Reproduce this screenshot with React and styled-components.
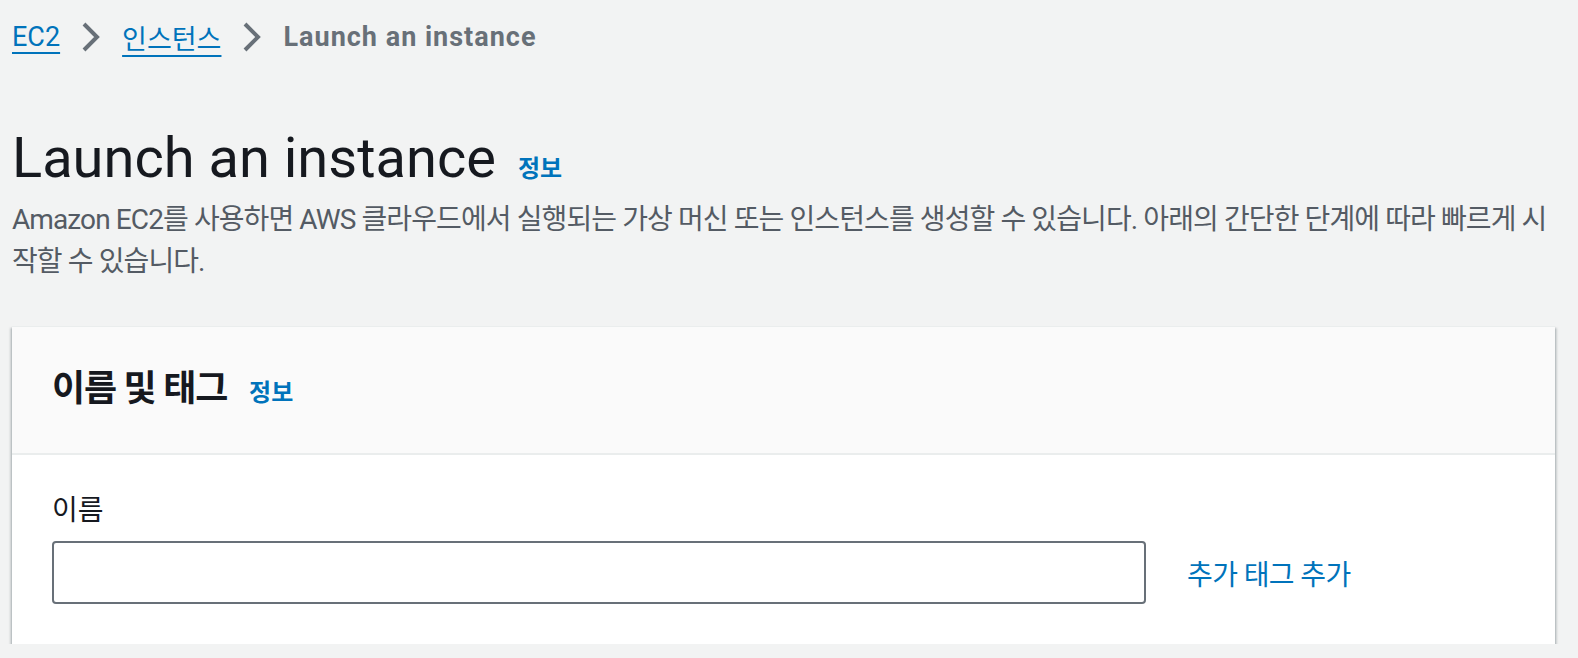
import styled, { createGlobalStyle } from 'styled-components';

const GlobalStyle = createGlobalStyle`
  html, body {
    margin: 0;
    padding: 0;
    background: #f2f3f3;
  }
  body {
    font-family: Roboto, "Noto Sans CJK KR", sans-serif;
    color: #16191f;
  }
`;

const Page = styled.div`
  padding: 0 23px 0 12px;
  display: flex;
  flex-direction: column;
`;

const Breadcrumbs = styled.nav`
  display: flex;
  align-items: center;
  height: 74px;
  gap: 21px;
  font-size: 27px;
`;

const Crumb = styled.a`
  color: ${(props) => (props.current ? '#687078' : '#0073bb')};
  font-weight: ${(props) => (props.current ? 700 : 400)};
  letter-spacing: ${(props) => (props.current ? '1px' : '0')};
  text-decoration: ${(props) => (props.current ? 'none' : 'underline')};
  text-decoration-thickness: 2px;
  text-underline-offset: 6px;
`;

const Chevron = () => (
  <svg width="20" height="30" viewBox="0 0 20 30" fill="none">
    <path d="M3 2l13 13L3 28" stroke="#687078" strokeWidth="4" />
  </svg>
);

const TitleRow = styled.div`
  display: flex;
  align-items: baseline;
  gap: 22px;
  margin-top: 48px;
`;

const Title = styled.h1`
  margin: 0;
  font-size: 56px;
  font-weight: 400;
  line-height: 72px;
  color: #16191f;
`;

const InfoLink = styled.a`
  color: #0073bb;
  font-weight: 700;
  font-size: 24px;
`;

const Description = styled.p`
  margin: 5px 0 0;
  font-size: 28px;
  line-height: 42px;
  letter-spacing: -0.9px;
  color: #545b64;
`;

const Card = styled.section`
  margin-top: 43px;
  background: #fff;
  border-top: 1px solid #eaeded;
  box-shadow: 0 2px 2px 0 rgba(0, 28, 36, 0.3), 2px 2px 2px 0 rgba(0, 28, 36, 0.15),
    -2px 2px 2px 0 rgba(0, 28, 36, 0.15);
`;

const CardHeader = styled.div`
  display: flex;
  align-items: baseline;
  gap: 22px;
  padding: 38px 40px 40px;
  background: #fafafa;
  border-bottom: 2px solid #eaeded;
`;

const CardTitle = styled.h2`
  margin: 0;
  font-size: 36px;
  line-height: 48px;
  font-weight: 700;
  letter-spacing: -1.2px;
`;

const CardBody = styled.div`
  padding: 36px 40px 40px;
`;

const Label = styled.label`
  display: block;
  font-size: 28px;
  line-height: 40px;
  margin-bottom: 10px;
`;

const FieldRow = styled.div`
  display: flex;
  align-items: center;
  gap: 41px;
`;

const Input = styled.input`
  box-sizing: border-box;
  width: 1094px;
  height: 63px;
  border: 2px solid #687078;
  border-radius: 4px;
  background: #fff;
  font-size: 28px;
  padding: 0 16px;
`;

const TextLink = styled.a`
  color: #0073bb;
  font-size: 28px;
  letter-spacing: -0.6px;
  text-decoration: none;
`;

export default function App() {
  return (
    <>
      <GlobalStyle />
      <Page>
        <Breadcrumbs>
          <Crumb href="#">EC2</Crumb>
          <Chevron />
          <Crumb href="#">인스턴스</Crumb>
          <Chevron />
          <Crumb current>Launch an instance</Crumb>
        </Breadcrumbs>
        <TitleRow>
          <Title>Launch an instance</Title>
          <InfoLink>정보</InfoLink>
        </TitleRow>
        <Description>
          Amazon EC2를 사용하면 AWS 클라우드에서 실행되는 가상 머신 또는 인스턴스를 생성할 수 있습니다. 아래의 간단한 단계에 따라 빠르게 시작할 수 있습니다.
        </Description>
        <Card>
          <CardHeader>
            <CardTitle>이름 및 태그</CardTitle>
            <InfoLink>정보</InfoLink>
          </CardHeader>
          <CardBody>
            <Label>이름</Label>
            <FieldRow>
              <Input type="text" />
              <TextLink href="#">추가 태그 추가</TextLink>
            </FieldRow>
          </CardBody>
        </Card>
      </Page>
    </>
  );
}
